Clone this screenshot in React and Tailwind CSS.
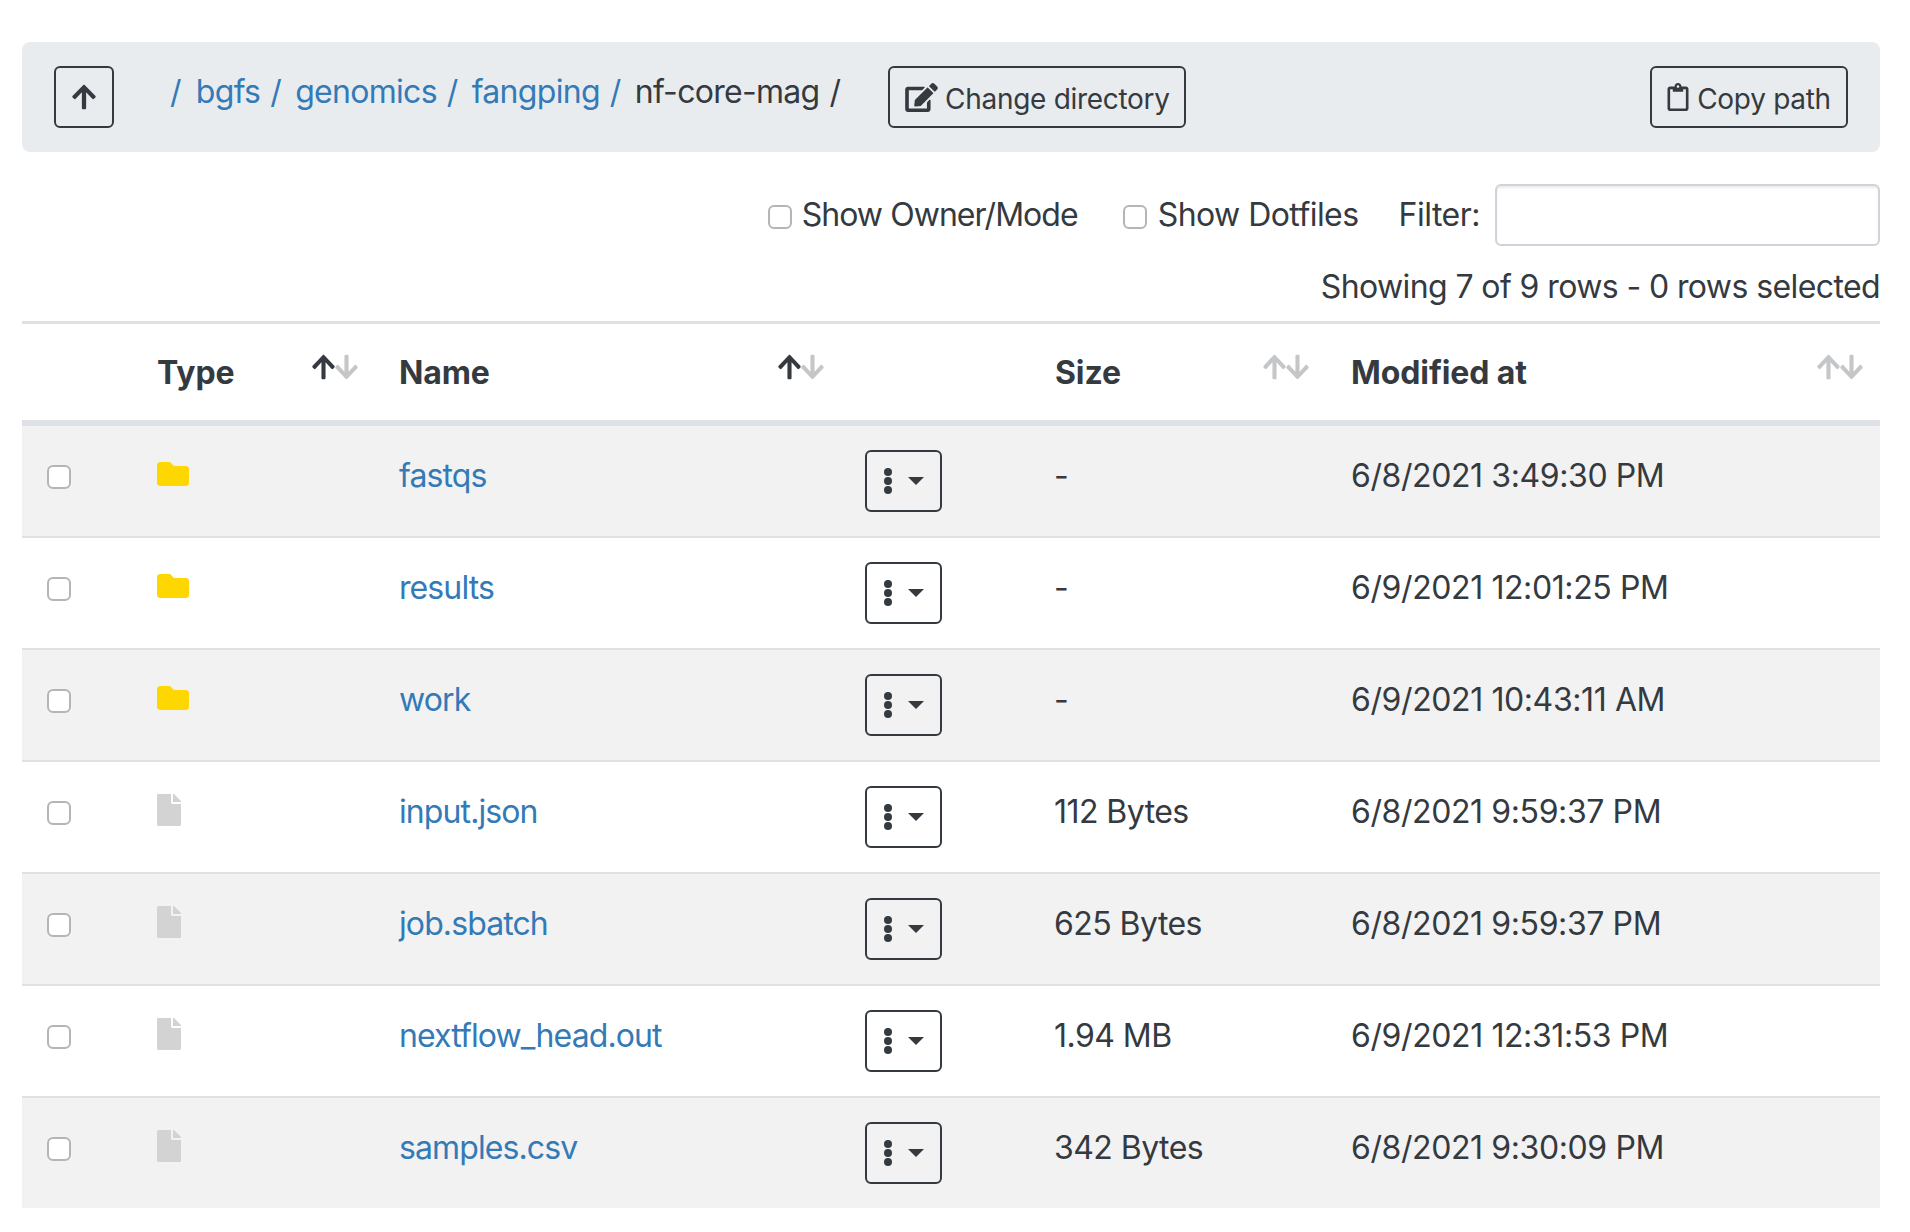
import React from "react";

const Up = ({ className }) => (
  <svg viewBox="0 0 448 512" preserveAspectRatio="none" className={className} fill="currentColor"><path d="M34.9 289.5l-22.2-22.2c-9.4-9.4-9.4-24.6 0-33.9L207 39c9.4-9.4 24.6-9.4 33.9 0l194.3 194.3c9.4 9.4 9.4 24.6 0 33.9L413 289.4c-9.5 9.5-25 9.3-34.3-.4L264 168.6V456c0 13.3-10.7 24-24 24h-32c-13.3 0-24-10.7-24-24V168.6L69.2 289.1c-9.3 9.8-24.8 10-34.3.4z"/></svg>
);
const Down = ({ className }) => (
  <svg viewBox="0 0 448 512" preserveAspectRatio="none" className={className} fill="currentColor"><path d="M413.1 222.5l22.2 22.2c9.4 9.4 9.4 24.6 0 33.9L241 473c-9.4 9.4-24.6 9.4-33.9 0L12.7 278.6c-9.4-9.4-9.4-24.6 0-33.9l22.2-22.2c9.5-9.5 25-9.3 34.3.4L184 343.4V56c0-13.3 10.7-24 24-24h32c13.3 0 24 10.7 24 24v287.4l114.8-120.5c9.3-9.8 24.8-10 34.3-.4z"/></svg>
);
const Folder = () => (
  <svg viewBox="0 0 512 384" className="w-[32px] h-[24px] block text-[#ffd700]" fill="currentColor"><path d="M464 64H272L208 0H48C21.5 0 0 21.5 0 48v288c0 26.5 21.5 48 48 48h416c26.500 0 48-21.500 48-48V112c0-26.500-21.500-48-48-48z"/></svg>
);
const FileI = () => (
  <svg viewBox="0 0 384 512" className="w-[24px] h-[32px] block text-[#d3d3d3]" fill="currentColor"><path d="M224 136V0H24C10.700 0 0 10.700 0 24v464c0 13.300 10.700 24 24 24h336c13.300 0 24-10.700 24-24V160H248c-13.200 0-24-10.800-24-24zm160-14.100v6.100H256V0h6.100c6.400 0 12.500 2.500 17 7l97.900 98c4.500 4.500 7 10.600 7 16.900z"/></svg>
);
const Edit = () => (
  <svg viewBox="0 0 576 512" className="w-[33px] h-[29px] shrink-0" fill="currentColor"><path d="M402.600 83.200l90.200 90.200c3.800 3.800 3.800 10 0 13.800L274.400 405.600l-92.800 10.300c-12.400 1.400-22.900-9.100-21.500-21.500l10.300-92.800L388.800 83.200c3.800-3.800 10-3.800 13.800 0zm162-22.900l-48.800-48.800c-15.200-15.200-39.900-15.200-55.200 0l-35.400 35.400c-3.800 3.800-3.800 10 0 13.800l90.200 90.200c3.800 3.800 10 3.800 13.800 0l35.400-35.400c15.200-15.300 15.200-40 0-55.200zM384 346.200V448H64V128h229.800c3.200 0 6.200-1.300 8.500-3.500l40-40c7.600-7.600 2.200-20.500-8.500-20.500H48C21.500 64 0 85.500 0 112v352c0 26.500 21.500 48 48 48h352c26.500 0 48-21.500 48-48V306.200c0-10.700-12.900-16-20.500-8.500l-40 40c-2.200 2.300-3.500 5.300-3.500 8.500z"/></svg>
);
const Clip = () => (
  <svg viewBox="0 0 384 512" className="w-[22px] h-[28px] shrink-0" fill="currentColor"><path d="M336 64h-80c0-35.300-28.700-64-64-64s-64 28.700-64 64H48C21.500 64 0 85.500 0 112v352c0 26.500 21.500 48 48 48h288c26.500 0 48-21.500 48-48V112c0-26.500-21.500-48-48-48zM192 40c13.300 0 24 10.700 24 24s-10.700 24-24 24-24-10.700-24-24 10.700-24 24-24zm144 418c0 3.300-2.700 6-6 6H54c-3.300 0-6-2.700-6-6V118c0-3.300 2.700-6 6-6h42v36c0 6.600 5.400 12 12 12h168c6.600 0 12-5.400 12-12v-36h42c3.300 0 6 2.700 6 6z"/></svg>
);

const Box = () => (
  <span className="block w-[24px] h-[24px] rounded-[6px] border-2 border-[#b5b5b5] bg-white" />
);

const Sort = ({ active }) => (
  <span className="flex items-start -mt-[9px] shrink-0">
    <Up className={`w-[23px] h-[28px] ${active ? "text-[#343a40]" : "text-[#c4c6c8]"}`} />
    <Down className="w-[23px] h-[28px] text-[#c4c6c8]" />
  </span>
);

const Sep = () => <span className="ml-[10px] mr-[14px] text-[#337ab7]">/</span>;

const rows = [
  ["d", "fastqs", "-", "6/8/2021 3:49:30 PM"],
  ["d", "results", "-", "6/9/2021 12:01:25 PM"],
  ["d", "work", "-", "6/9/2021 10:43:11 AM"],
  ["f", "input.json", "112 Bytes", "6/8/2021 9:59:37 PM"],
  ["f", "job.sbatch", "625 Bytes", "6/8/2021 9:59:37 PM"],
  ["f", "nextflow_head.out", "1.94 MB", "6/9/2021 12:31:53 PM"],
  ["f", "samples.csv", "342 Bytes", "6/8/2021 9:30:09 PM"],
];

export default function App() {
  return (
    <div className="w-[1910px] h-[1232px] bg-white pt-[42px] pl-[22px] pr-[30px] font-['Inter','Liberation_Sans',sans-serif] text-[32px] leading-[48px] text-[#343a40]">
      <div className="h-[110px] rounded-[8px] bg-[#e9ecef] px-[32px] flex items-start pt-[24px]">
        <button className="w-[60px] h-[62px] border-2 border-[#343a40] rounded-[6px] flex items-center justify-center">
          <Up className="w-[24px] h-[28px] text-[#343a40]" />
        </button>
        <div className="ml-[56px] flex mt-[2px] whitespace-nowrap tracking-[-0.7px]">
          <span className="mr-[15px] text-[#337ab7]">/</span>
          <span className="text-[#337ab7]">bgfs</span><Sep />
          <span className="text-[#337ab7]">genomics</span><Sep />
          <span className="text-[#337ab7]">fangping</span><Sep />
          <span>nf-core-mag</span><span className="ml-[10px]">/</span>
        </div>
        <button className="ml-[48px] h-[62px] w-[298px] border-2 border-[#343a40] rounded-[6px] flex items-center justify-center gap-[7px] text-[28px] tracking-[-0.3px] text-[#343a40] leading-none whitespace-nowrap">
          <Edit /><span className="mt-[3px]">Change directory</span>
        </button>
        <button className="ml-auto h-[62px] w-[198px] border-2 border-[#343a40] rounded-[6px] flex items-center justify-center gap-[8px] text-[28px] tracking-[-0.3px] text-[#343a40] leading-none whitespace-nowrap">
          <Clip /><span className="mt-[3px]">Copy path</span>
        </button>
      </div>

      <div className="mt-[32px] flex items-center justify-end h-[62px]">
        <span className="mt-[3px]"><Box /></span>
        <span className="ml-[10px] tracking-[-0.95px]">Show Owner/Mode</span>
        <span className="ml-[45px] mt-[3px]"><Box /></span>
        <span className="ml-[11px] tracking-[-0.56px]">Show Dotfiles</span>
        <span className="ml-[40px] tracking-[-0.5px]">Filter:</span>
        <input className="ml-[15px] w-[385px] h-[62px] rounded-[6px] border-2 border-[#ced4da] bg-white shadow-[inset_0_2px_2px_rgba(0,0,0,0.075)]" />
      </div>
      <div className="mt-[17px] h-[48px] text-right tracking-[-0.6px]">Showing 7 of 9 rows - 0 rows selected</div>

      <table className="mt-[10px] w-[1858px] table-fixed border-collapse">
        <colgroup>
          <col className="w-[111px]" />
          <col className="w-[242px]" />
          <col className="w-[466px]" />
          <col className="w-[190px]" />
          <col className="w-[296px]" />
          <col className="w-[553px]" />
        </colgroup>
        <thead>
          <tr className="h-[100px] border-t-[3px] border-t-[#dee2e6] border-b-[6px] border-b-[#dee2e6]">
            <th />
            {["Type", "Name"].map((t) => (
              <th key={t} className="pl-[24px] pr-[17px] font-bold text-left">
                <div className="flex items-center justify-between"><span className="mt-[2px] tracking-[-0.1px]">{t}</span><Sort active /></div>
              </th>
            ))}
            <th />
            <th className="pl-[24px] pr-[18px] font-bold text-left">
              <div className="flex items-center justify-between"><span className="mt-[2px] tracking-[-0.1px]">Size</span><Sort /></div>
            </th>
            <th className="pl-[24px] pr-[17px] font-bold text-left">
              <div className="flex items-center justify-between"><span className="mt-[2px] tracking-[-0.1px]">Modified at</span><Sort /></div>
            </th>
          </tr>
        </thead>
        <tbody>
          {rows.map(([k, name, size, mod], i) => (
            <tr key={name} className={`${i === 0 ? "h-[114px]" : i === 6 ? "h-[111px]" : "h-[112px]"} ${i % 2 === 0 ? "bg-[#f2f2f2]" : "bg-white"} ${i < 6 ? "border-b-2 border-[#dee2e6]" : ""}`}>
              <td className="pl-[25px] align-top pt-[39px]"><Box /></td>
              <td className={`pl-[24px] align-top ${k === "d" ? "pt-[36px]" : "pt-[32px]"}`}>{k === "d" ? <Folder /> : <FileI />}</td>
              <td className="pl-[24px] align-top pt-[26px] text-[#337ab7] tracking-[-0.9px]">{name}</td>
              <td className="pl-[24px] align-top pt-[24px]">
                <button className="w-[77px] h-[62px] border-2 border-[#343a40] rounded-[6px] flex items-center justify-center gap-[16px]">
                  <svg viewBox="0 0 8 26" className="w-[8px] h-[26px]" fill="currentColor"><circle cx="4" cy="4" r="4" /><circle cx="4" cy="13" r="4" /><circle cx="4" cy="22" r="4" /></svg>
                  <span className="block w-0 h-0 border-x-[8px] border-x-transparent border-t-[8px] border-t-[#343a40]" />
                </button>
              </td>
              <td className="pl-[23px] align-top pt-[26px] tracking-[-0.55px]">{size}</td>
              <td className="pl-[24px] align-top pt-[26px] tracking-[-0.4px]">{mod}</td>
            </tr>
          ))}
        </tbody>
      </table>
    </div>
  );
}
